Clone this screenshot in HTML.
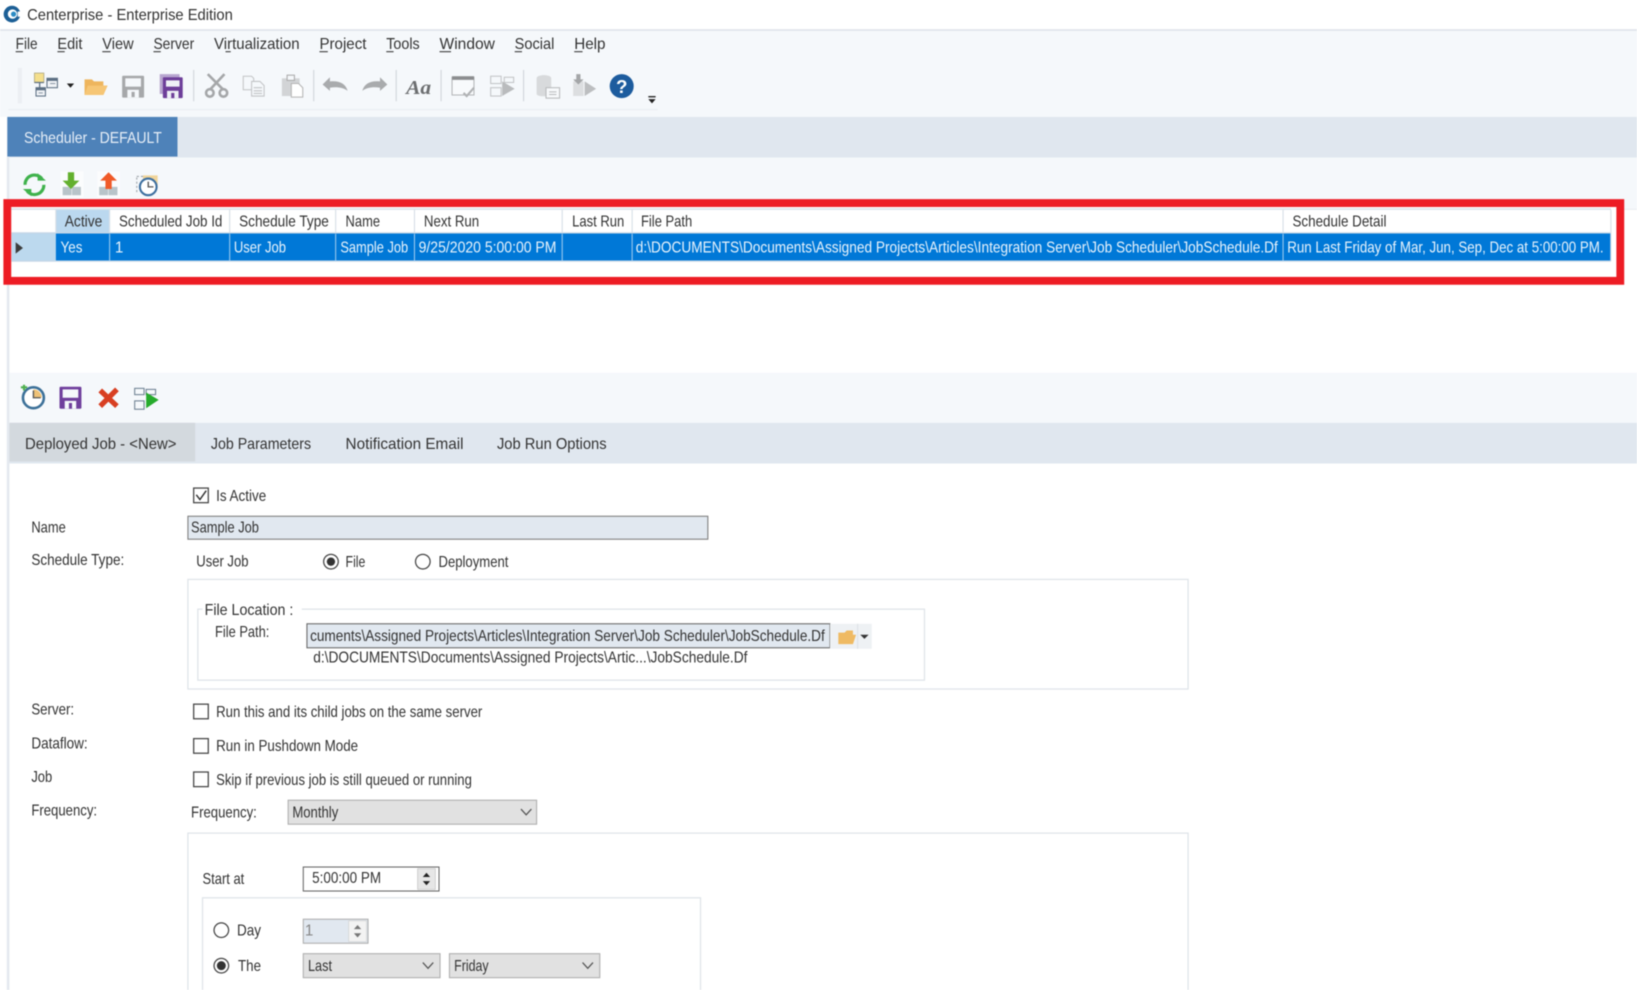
<!DOCTYPE html>
<html><head><meta charset="utf-8"><title>Centerprise - Enterprise Edition</title>
<style>
html,body{margin:0;padding:0;background:#fff;width:1637px;height:990px;overflow:hidden}
svg{position:absolute;left:0;top:0;display:block;filter:blur(.5px)}
text{font-family:"Liberation Sans",sans-serif;font-size:14.6px;fill:#333}
</style></head><body>
<svg width="1637" height="990" viewBox="0 0 1568 948.3" preserveAspectRatio="none" xmlns="http://www.w3.org/2000/svg">
<rect width="1568" height="949" fill="#fff"/>
<!-- title -->
<circle cx="11.5" cy="13.5" r="8" fill="#1c5f96"/><circle cx="12" cy="13.5" r="4.5" fill="#fff"/><circle cx="13" cy="13.5" r="2.5" fill="#2b8bc4"/><rect x="17" y="11" width="4" height="5" fill="#fff"/>
<text x="26" y="19" textLength="197" lengthAdjust="spacingAndGlyphs" style="font-size:15px">Centerprise - Enterprise Edition</text>
<rect y="28" width="1568" height="84" fill="#f5f8fb"/>
<rect y="28" width="1568" height="1.5" fill="#dfe4ea"/>
<!-- menu -->
<g>
<text x="15" y="47" textLength="21" lengthAdjust="spacingAndGlyphs">File</text><rect x="15" y="49" width="7" height="1" fill="#333"/>
<text x="55" y="47" textLength="24" lengthAdjust="spacingAndGlyphs">Edit</text><rect x="55" y="49" width="7" height="1" fill="#333"/>
<text x="98" y="47" textLength="30" lengthAdjust="spacingAndGlyphs">View</text><rect x="98" y="49" width="8" height="1" fill="#333"/>
<text x="147" y="47" textLength="39" lengthAdjust="spacingAndGlyphs">Server</text><rect x="147" y="49" width="7" height="1" fill="#333"/>
<text x="205" y="47" textLength="82" lengthAdjust="spacingAndGlyphs">Virtualization</text><rect x="216" y="49" width="5" height="1" fill="#333"/>
<text x="306" y="47" textLength="45" lengthAdjust="spacingAndGlyphs">Project</text><rect x="306" y="49" width="8" height="1" fill="#333"/>
<text x="370" y="47" textLength="32" lengthAdjust="spacingAndGlyphs">Tools</text><rect x="370" y="49" width="7" height="1" fill="#333"/>
<text x="421" y="47" textLength="53" lengthAdjust="spacingAndGlyphs">Window</text><rect x="421" y="49" width="11" height="1" fill="#333"/>
<text x="493" y="47" textLength="38" lengthAdjust="spacingAndGlyphs">Social</text><rect x="493" y="49" width="7" height="1" fill="#333"/>
<text x="550" y="47" textLength="30" lengthAdjust="spacingAndGlyphs">Help</text><rect x="550" y="49" width="8" height="1" fill="#333"/>
</g>
<!-- toolbar -->
<rect x="17" y="65" width="4" height="34" fill="#eceff3"/>
<g>
 <rect x="33" y="70" width="9" height="9" fill="#f4df8c" stroke="#b0a880" stroke-width=".8"/>
 <path d="M33 79H42M38 79V84" stroke="#5c6f83" stroke-width="1.200" fill="none"/>
 <rect x="45" y="75" width="10" height="9" fill="#f1f4f7" stroke="#5c6f83"/><rect x="45" y="75" width="10" height="2.500" fill="#5c6f83"/>
 <path d="M48 80H53" stroke="#8a98a6"/>
 <rect x="34.500" y="84" width="9" height="8" fill="#f1f4f7" stroke="#5c6f83"/><rect x="34.500" y="84" width="9" height="2.500" fill="#5c6f83"/>
 <path d="M37 89H41" stroke="#8a98a6"/>
</g>
<path d="M64 80H71L67.500 84Z" fill="#222"/>
<path d="M81 90V76H88L90 78H99V82H103L99 91H81Z" fill="#eeb55d"/><path d="M84 82H103L99 91H81Z" fill="#f6c675"/>
<g><rect x="117" y="72.500" width="21" height="21" rx="1" fill="#a6a8aa"/><rect x="120" y="75" width="15" height="8" fill="#f5f8fb"/><rect x="122" y="86" width="11" height="7.500" fill="#f5f8fb"/><rect x="126" y="88" width="3" height="5" fill="#a6a8aa"/></g>
<g><rect x="153" y="71" width="19" height="19" fill="#b8a6cf"/><rect x="156" y="74" width="19" height="20" rx="1" fill="#6d3e99"/><rect x="159" y="77" width="13" height="6" fill="#eef0f6"/><rect x="160" y="87" width="11" height="7" fill="#eef0f6"/><rect x="164" y="89" width="3" height="5" fill="#6d3e99"/></g>
<rect x="185" y="67" width="1" height="30" fill="#cfd4d9"/>
<g fill="none" stroke="#a5a7a9" stroke-width="2.500"><path d="M199 71L214 86M215 71L201 86"/><circle cx="201" cy="89" r="3.600"/><circle cx="214" cy="89" r="3.600"/></g>
<g fill="#f5f8fb" stroke="#c2c4c6"><path d="M233 73H241L243 75V86H233Z"/><path d="M241 78H249L253 82V92H241Z"/><path d="M243 84H251M243 87H251M243 89.500H251"/></g>
<g><rect x="270" y="75" width="17" height="17" fill="#d2d4d6"/><rect x="275" y="72" width="7" height="5" fill="#f5f8fb" stroke="#aaa"/><path d="M279 80H286L290 84V93H279Z" fill="#fff" stroke="#b4b4b4"/></g>
<rect x="300" y="67" width="1" height="30" fill="#cfd4d9"/>
<path d="M309 81L316 74V78C325 77 331 80 333 87C329 84 323 83 316 84V87Z" fill="#a9abad"/>
<path d="M371 81L364 74V78C355 77 349 80 347 87C351 84 357 83 364 84V87Z" fill="#a9abad"/>
<rect x="379" y="67" width="1" height="30" fill="#cfd4d9"/>
<text x="389" y="90" textLength="24" lengthAdjust="spacingAndGlyphs" style="font-family:'Liberation Serif',serif;font-size:19px;font-style:italic;font-weight:bold;fill:#6c6e70">Aa</text>
<rect x="422" y="67" width="1" height="30" fill="#cfd4d9"/>
<rect x="433" y="74" width="21" height="17" fill="#f8fafc" stroke="#b4b6b8"/><rect x="433" y="73" width="21" height="3.500" fill="#8b8d8f"/><path d="M444 89L447 92L454 84" fill="none" stroke="#b0b2b4" stroke-width="2"/>
<g fill="#f5f8fb" stroke="#c2c4c6"><rect x="470" y="73" width="10" height="7"/><rect x="470" y="84" width="10" height="8"/><rect x="483" y="74" width="9" height="5"/></g><path d="M481 78L493 85L481 92Z" fill="#b9bbbd"/>
<rect x="501" y="67" width="1" height="30" fill="#cfd4d9"/>
<path d="M514 75C514 71 528 71 528 75V90C528 93 514 93 514 90Z" fill="#d8dadc"/><rect x="523" y="84" width="13" height="10" fill="#f7f9fb" stroke="#b8babc"/><path d="M526 88H533M526 90.500H533" stroke="#b8babc"/>
<path d="M549 79C549 76 559 76 559 79V92H549Z" fill="#dcdee0"/><path d="M552 71H556V76H559L554 81L549 76H552Z" fill="#a4a6a8"/><path d="M560 78L571 85L560 92Z" fill="#bcbec0"/>
<circle cx="595.500" cy="82.500" r="11.500" fill="#1d5c9e"/>
<text x="590" y="89" textLength="11" lengthAdjust="spacingAndGlyphs" style="font-size:18px;font-weight:bold;fill:#fff">?</text>
<rect x="621" y="92" width="7" height="1.300" fill="#222"/><path d="M621 95H628L624.500 99Z" fill="#222"/>
<rect x="8" y="104.500" width="622" height="1" fill="#e9edf1"/>
<!-- tab strip -->
<rect x="0" y="112" width="7" height="38" fill="#fff"/>
<rect x="7" y="112" width="1561" height="39" fill="#e0e7ef"/>
<rect x="7" y="112" width="163" height="38" fill="#4e82b9"/>
<text x="23" y="137" textLength="132" lengthAdjust="spacingAndGlyphs" style="fill:#e6eef7;font-size:15px">Scheduler - DEFAULT</text>
<!-- left rail -->
<rect x="6.500" y="150" width="2.500" height="800" fill="#e4e9ef"/>
<rect x="9" y="151" width="1559" height="49" fill="#f5f8fb"/>
<rect x="9" y="200" width="1559" height="1" fill="#e8ecf0"/>
<!-- subtoolbar -->
<g fill="none" stroke="#3fb24c" stroke-width="3"><path d="M24 177A9 9 0 0 1 40 171"/><path d="M42 177A9 9 0 0 1 26 183"/></g>
<path d="M36 166L44 173H36Z M30 188L22 181H30Z" fill="#3fb24c"/>
<rect x="58" y="164" width="22" height="25" fill="#fbfcfd"/>
<rect x="60" y="179" width="8.500" height="8" fill="#b8c4c9"/><rect x="69" y="179" width="8.500" height="8" fill="#b8c4c9"/>
<path d="M65 165H71V173H76L68 181L60 173H65Z" fill="#63b02e"/>
<rect x="93" y="164" width="22" height="25" fill="#fbfcfd"/>
<rect x="95" y="179" width="8.500" height="8" fill="#b8c4c9"/><rect x="104" y="179" width="8.500" height="8" fill="#b8c4c9"/>
<path d="M101 181V173H96L104 165L112 173H107V181Z" fill="#f05a28"/>
<rect x="137" y="168" width="14" height="12" fill="#f0d49a"/><path d="M131 170V184" stroke="#9aa0a6" stroke-dasharray="2 2" fill="none"/><path d="M131 169H138" stroke="#9aa0a6" stroke-dasharray="2 2" fill="none"/>
<circle cx="142" cy="179" r="8" fill="#fff" stroke="#3d6f9f" stroke-width="2"/><path d="M142 174V179H147" fill="none" stroke="#555" stroke-width="1.300"/>
<!-- grid -->
<rect x="11" y="198" width="1537" height="67" fill="#fff"/>
<rect x="11" y="199.500" width="1532" height="1.500" fill="#d9dfe6"/>
<rect x="53.500" y="201" width="51" height="22" fill="#bbd8ef"/>
<rect x="11" y="223.500" width="42.500" height="26.500" fill="#bcd9ee"/>
<rect x="53.500" y="223.500" width="1489" height="26.500" fill="#0078d7"/>
<rect x="11" y="222.500" width="1532" height="1.200" fill="#c5d6e6"/>
<rect x="11" y="249.500" width="1532" height="1.200" fill="#c5d6e6"/>
<rect x="1542.500" y="201" width="1" height="49" fill="#d5dde5"/>
<g fill="#d5dde5"><rect x="53" y="201" width="1" height="22"/><rect x="104.500" y="201" width="1" height="22"/><rect x="219.500" y="201" width="1" height="22"/><rect x="321" y="201" width="1" height="22"/><rect x="396.500" y="201" width="1" height="22"/><rect x="538" y="201" width="1" height="22"/><rect x="605" y="201" width="1" height="22"/><rect x="1228.500" y="201" width="1" height="22"/></g>
<g fill="#9ecbef"><rect x="104.500" y="224" width="1" height="26"/><rect x="219.500" y="224" width="1" height="26"/><rect x="321" y="224" width="1" height="26"/><rect x="396.500" y="224" width="1" height="26"/><rect x="538" y="224" width="1" height="26"/><rect x="605" y="224" width="1" height="26"/><rect x="1228.500" y="224" width="1" height="26"/></g>
<path d="M15 232L22 237.500L15 243Z" fill="#3c3c3c"/>
<g>
<text x="62" y="217" textLength="36" lengthAdjust="spacingAndGlyphs">Active</text>
<text x="114" y="217" textLength="99" lengthAdjust="spacingAndGlyphs">Scheduled Job Id</text>
<text x="229" y="217" textLength="86" lengthAdjust="spacingAndGlyphs">Schedule Type</text>
<text x="331" y="217" textLength="33" lengthAdjust="spacingAndGlyphs">Name</text>
<text x="406" y="217" textLength="53" lengthAdjust="spacingAndGlyphs">Next Run</text>
<text x="548" y="217" textLength="50" lengthAdjust="spacingAndGlyphs">Last Run</text>
<text x="614" y="217" textLength="49" lengthAdjust="spacingAndGlyphs">File Path</text>
<text x="1238" y="217" textLength="90" lengthAdjust="spacingAndGlyphs">Schedule Detail</text>
</g>
<g>
<text style="fill:#e8f3fc" x="58" y="242" textLength="21" lengthAdjust="spacingAndGlyphs">Yes</text>
<text style="fill:#e8f3fc" x="110" y="242">1</text>
<text style="fill:#e8f3fc" x="224" y="242" textLength="50" lengthAdjust="spacingAndGlyphs">User Job</text>
<text style="fill:#e8f3fc" x="326" y="242" textLength="65" lengthAdjust="spacingAndGlyphs">Sample Job</text>
<text style="fill:#e8f3fc" x="401" y="242" textLength="132" lengthAdjust="spacingAndGlyphs">9/25/2020 5:00:00 PM</text>
<text style="fill:#e8f3fc" x="609" y="242" textLength="615" lengthAdjust="spacingAndGlyphs">d:\DOCUMENTS\Documents\Assigned Projects\Articles\Integration Server\Job Scheduler\JobSchedule.Df</text>
<text style="fill:#e8f3fc" x="1233" y="242" textLength="303" lengthAdjust="spacingAndGlyphs">Run Last Friday of Mar, Jun, Sep, Dec at 5:00:00 PM.</text>
</g>
<!-- red frame -->
<rect x="7" y="194.500" width="1545" height="74.500" fill="none" stroke="#ed1c24" stroke-width="7.500"/>
<!-- second toolbar -->
<rect x="9" y="357" width="1559" height="48" fill="#f5f8fb"/>
<circle cx="32" cy="381" r="10" fill="#fff" stroke="#3d7199" stroke-width="2.500"/>
<path d="M32 373V381H40A8 8 0 0 0 32 373Z" fill="#efc277"/>
<path d="M32 374V381H39" fill="none" stroke="#555" stroke-width="1.300"/>
<path d="M20 371H26M23 368.500V374" stroke="#4fb04f" stroke-width="2"/>
<g><rect x="57" y="370.500" width="21" height="21" rx="1" fill="#6f3f9c"/><rect x="60" y="373" width="15" height="8" fill="#f5f8fb"/><rect x="62" y="384" width="11" height="7.500" fill="#f5f8fb"/><rect x="66" y="386" width="3" height="5.500" fill="#6f3f9c"/></g>
<path d="M96 374L112 389M112 373L96 389" stroke="#d83f22" stroke-width="5" fill="none"/>
<g fill="#f5f8fb" stroke="#6c7f91"><rect x="129" y="372" width="9" height="6"/><rect x="129" y="384" width="9" height="8"/><rect x="140" y="373" width="9" height="5"/></g><path d="M140 376L152 383L140 391Z" fill="#26ab2c"/>
<!-- tabs -->
<rect x="9" y="405" width="1559" height="39" fill="#e0e7ef"/>
<rect x="9" y="405" width="178" height="37" fill="#d3d9de"/>
<text x="24" y="430" textLength="145" lengthAdjust="spacingAndGlyphs" style="font-size:15px">Deployed Job - &lt;New&gt;</text>
<text x="202" y="430" textLength="96" lengthAdjust="spacingAndGlyphs" style="font-size:15px">Job Parameters</text>
<text x="331" y="430" textLength="113" lengthAdjust="spacingAndGlyphs" style="font-size:15px">Notification Email</text>
<text x="476" y="430" textLength="105" lengthAdjust="spacingAndGlyphs" style="font-size:15px">Job Run Options</text>
<!-- form -->
<rect x="185.500" y="467.500" width="14" height="14" fill="#fff" stroke="#444" stroke-width="1.200"/><path d="M188 474L191.500 478.500L197.500 470" fill="none" stroke="#333" stroke-width="1.400"/>
<text x="207" y="480" textLength="48" lengthAdjust="spacingAndGlyphs">Is Active</text>
<text x="30" y="510" textLength="33" lengthAdjust="spacingAndGlyphs">Name</text>
<rect x="180" y="494.500" width="498" height="22" fill="#e1e8f0" stroke="#7b7b7b"/>
<text x="183" y="510" textLength="65" lengthAdjust="spacingAndGlyphs">Sample Job</text>
<text x="30" y="541" textLength="89" lengthAdjust="spacingAndGlyphs">Schedule Type:</text>
<text x="188" y="542.500" textLength="50" lengthAdjust="spacingAndGlyphs">User Job</text>
<circle cx="317" cy="538" r="7" fill="#fff" stroke="#444" stroke-width="1.200"/><circle cx="317" cy="538" r="4" fill="#333"/>
<text x="331" y="543" textLength="19" lengthAdjust="spacingAndGlyphs">File</text>
<circle cx="405" cy="538" r="7" fill="#fff" stroke="#444" stroke-width="1.200"/>
<text x="420" y="543" textLength="67" lengthAdjust="spacingAndGlyphs">Deployment</text>
<rect x="180" y="555" width="958" height="105" fill="none" stroke="#dfe4e9" stroke-width="1.200"/>
<rect x="189.500" y="583.500" width="696" height="68" fill="none" stroke="#dfe4e9" stroke-width="1.200"/>
<rect x="194" y="578" width="95" height="12" fill="#fff"/>
<text x="196" y="589" textLength="85" lengthAdjust="spacingAndGlyphs">File Location :</text>
<text x="206" y="610" textLength="52" lengthAdjust="spacingAndGlyphs">File Path:</text>
<rect x="294" y="597.500" width="501" height="23" fill="#e1e8f0" stroke="#666"/>
<text x="297" y="614" textLength="493" lengthAdjust="spacingAndGlyphs">cuments\Assigned Projects\Articles\Integration Server\Job Scheduler\JobSchedule.Df</text>
<rect x="795" y="597.500" width="40" height="24" fill="#eef1f4"/><rect x="821" y="597.500" width="1" height="24" fill="#dde1e5"/>
<path d="M803 617V606H809L811 604H817V608H820L817 617Z" fill="#efba63"/>
<path d="M824 608H832L828 612Z" fill="#333"/>
<text x="300" y="634.500" textLength="416" lengthAdjust="spacingAndGlyphs">d:\DOCUMENTS\Documents\Assigned Projects\Artic...\JobSchedule.Df</text>
<text x="30" y="684.500" textLength="41" lengthAdjust="spacingAndGlyphs">Server:</text>
<rect x="185.500" y="674.500" width="14" height="14" fill="#fff" stroke="#444" stroke-width="1.200"/>
<text x="207" y="687" textLength="255" lengthAdjust="spacingAndGlyphs">Run this and its child jobs on the same server</text>
<text x="30" y="717" textLength="54" lengthAdjust="spacingAndGlyphs">Dataflow:</text>
<rect x="185.500" y="707.500" width="14" height="14" fill="#fff" stroke="#444" stroke-width="1.200"/>
<text x="207" y="719.500" textLength="136" lengthAdjust="spacingAndGlyphs">Run in Pushdown Mode</text>
<text x="30" y="749" textLength="20" lengthAdjust="spacingAndGlyphs">Job</text>
<rect x="185.500" y="739.500" width="14" height="14" fill="#fff" stroke="#444" stroke-width="1.200"/>
<text x="207" y="752" textLength="245" lengthAdjust="spacingAndGlyphs">Skip if previous job is still queued or running</text>
<text x="30" y="781" textLength="63" lengthAdjust="spacingAndGlyphs">Frequency:</text>
<text x="183" y="783" textLength="63" lengthAdjust="spacingAndGlyphs">Frequency:</text>
<rect x="276" y="766.500" width="238" height="23" fill="#e1e1e1" stroke="#adadad"/>
<text x="280" y="783" textLength="44" lengthAdjust="spacingAndGlyphs">Monthly</text>
<path d="M499 775L504 780.500L509 775" fill="none" stroke="#555" stroke-width="1.200"/>
<rect x="180" y="798" width="958" height="160" fill="none" stroke="#dfe4e9" stroke-width="1.200"/>
<text x="194" y="847" textLength="40" lengthAdjust="spacingAndGlyphs">Start at</text>
<rect x="290.500" y="830.500" width="130" height="23" fill="#fff" stroke="#666"/>
<text x="299" y="846" textLength="66" lengthAdjust="spacingAndGlyphs">5:00:00 PM</text>
<rect x="400" y="832" width="17" height="20" fill="#e6e6e6" stroke="#bdbdbd" stroke-width=".6"/><path d="M405 840H412L408.500 836Z M405 844H412L408.500 848Z" fill="#222"/>
<rect x="194" y="860" width="477" height="100" fill="none" stroke="#dfe4e9" stroke-width="1.200"/>
<circle cx="212" cy="891" r="7" fill="#fff" stroke="#444" stroke-width="1.200"/>
<text x="227" y="896" textLength="23" lengthAdjust="spacingAndGlyphs">Day</text>
<rect x="290.500" y="880.500" width="62" height="23" fill="#e1e8f0" stroke="#adadad"/>
<text x="292" y="896" style="fill:#888">1</text>
<rect x="334" y="882" width="17" height="20" fill="#f3f3f3" stroke="#d0d0d0" stroke-width=".6"/><path d="M339 890H346L342.500 886Z M339 894H346L342.500 898Z" fill="#777"/>
<circle cx="212" cy="925" r="7" fill="#fff" stroke="#444" stroke-width="1.200"/><circle cx="212" cy="925" r="4.300" fill="#333"/>
<text x="228" y="930" textLength="22" lengthAdjust="spacingAndGlyphs">The</text>
<rect x="290.500" y="913.500" width="131" height="23" fill="#e1e1e1" stroke="#adadad"/>
<text x="295" y="930" textLength="23" lengthAdjust="spacingAndGlyphs">Last</text>
<path d="M405 922L410 927.500L415 922" fill="none" stroke="#555" stroke-width="1.200"/>
<rect x="430.500" y="913.500" width="144" height="23" fill="#e1e1e1" stroke="#adadad"/>
<text x="435" y="930" textLength="33" lengthAdjust="spacingAndGlyphs">Friday</text>
<path d="M558 922L563 927.500L568 922" fill="none" stroke="#555" stroke-width="1.200"/>
</svg>
</body></html>
